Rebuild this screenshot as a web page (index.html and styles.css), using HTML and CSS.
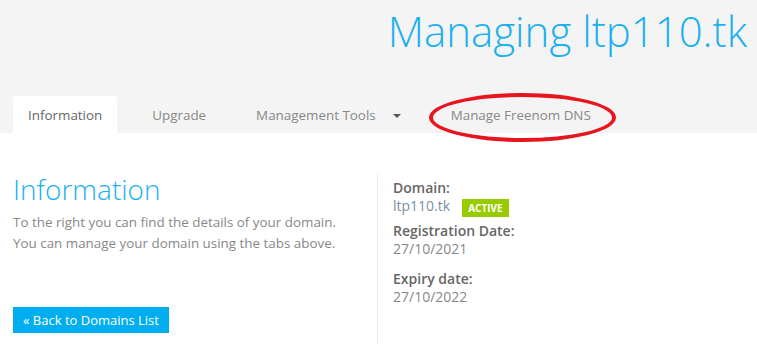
FILE: index.html
```html
<!DOCTYPE html>
<html lang="en">
<head>
    <meta charset="UTF-8">
    <meta name="viewport" content="width=device-width, initial-scale=1.0">
    <title>Managing ltp110.tk</title>
    <link rel="stylesheet" href="styles.css">
</head>
<body>
    <!-- Page header with tabs -->
    <div class="header">
        <h1 class="title">Managing ltp110.tk</h1>
        <ul class="tabs">
            <li class="tab active">Information</li>
            <li class="tab">Upgrade</li>
            <li class="tab">Management Tools<span class="caret"></span></li>
            <li class="tab highlighted">Manage Freenom DNS</li>
        </ul>
    </div>

    <!-- Tab content -->
    <div class="content">
        <div class="intro">
            <h2>Information</h2>
            <p>To the right you can find the details of your domain.<br>You can manage your domain using the tabs above.</p>
            <a class="btn" href="#">&laquo; Back to Domains List</a>
        </div>
        <div class="details">
            <div class="label">Domain:</div>
            <div class="value domain"><a href="#">ltp110.tk</a><span class="badge">ACTIVE</span></div>
            <div class="label">Registration Date:</div>
            <div class="value">27/10/2021</div>
            <div class="label spaced">Expiry date:</div>
            <div class="value">27/10/2022</div>
        </div>
    </div>
</body>
</html>
```

FILE: styles.css
```css
/* Base */
body {
    font-family: 'Open Sans', 'Liberation Sans', sans-serif;
    margin: 0;
    padding: 0;
    background: #fff;
    color: #888;
    font-size: 13px;
}

/* Header */
.header {
    background-color: #f4f4f4;
    padding: 0 10px 0 13px;
    height: 133px;
    display: flex;
    flex-direction: column;
    justify-content: space-between;
}

.title {
    margin: 0;
    padding-top: 2px;
    font-size: 42px;
    font-weight: 300;
    color: #1cb0ee;
    text-align: right;
    line-height: 58px;
}

.tabs {
    list-style: none;
    margin: 0;
    padding: 0;
    display: flex;
    gap: 20px;
}

.tab {
    height: 37px;
    line-height: 39px;
    padding: 0 15px;
    font-size: 13.4px;
    color: #888;
    border-radius: 3px 3px 0 0;
    position: relative;
}

.tab.active {
    background: #fff;
    color: #666;
}

.caret {
    display: inline-block;
    width: 0;
    height: 0;
    margin-left: 17px;
    vertical-align: middle;
    border-top: 4px solid #555;
    border-left: 4px solid transparent;
    border-right: 4px solid transparent;
}

/* Red marker drawn around the DNS tab */
.highlighted::after {
    content: "";
    position: absolute;
    left: -7px;
    top: -3px;
    width: 179px;
    height: 41px;
    border: 4px solid #e8141e;
    border-radius: 50%;
}

/* Content */
.content {
    display: flex;
    padding: 0 13px;
}

.intro {
    width: 364px;
    margin-top: 41px;
    border-right: 1px solid #eee;
    min-height: 170px;
}

.intro h2 {
    margin: 0;
    font-size: 28px;
    font-weight: 300;
    color: #1cb0ee;
    line-height: 30px;
}

.intro p {
    margin: 8px 0 53px;
    font-size: 13.4px;
    line-height: 21px;
    color: #888;
}

.btn {
    display: inline-block;
    background: #00aeef;
    color: #fff;
    text-decoration: none;
    font-size: 13px;
    padding: 0 10px;
    line-height: 26px;
}

.details {
    padding: 46px 0 0 15px;
}

.label {
    font-weight: 600;
    color: #666;
    font-size: 14px;
    line-height: 18px;
}

.label.spaced {
    margin-top: 12px;
}

.value {
    font-size: 14px;
    line-height: 18px;
    color: #888;
}

.value.domain {
    height: 25px;
}

.value a {
    color: #7a8fa6;
    text-decoration: none;
}

.badge {
    display: inline-block;
    margin-left: 12px;
    margin-top: 2px;
    background: #99cc00;
    color: #fff;
    font-size: 10px;
    font-weight: 700;
    padding: 0 6px;
    line-height: 18px;
    vertical-align: top;
}
```
